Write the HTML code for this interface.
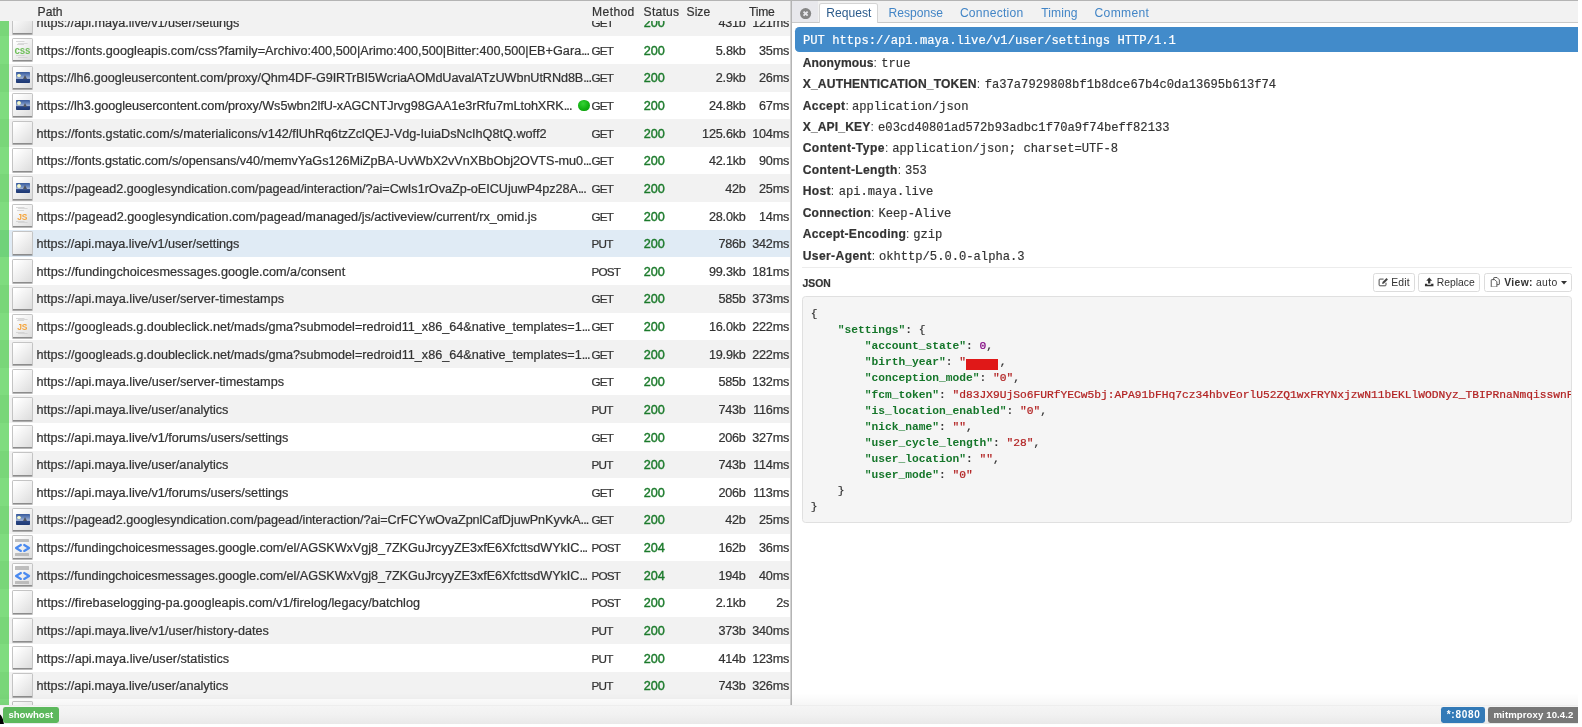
<!DOCTYPE html>
<html lang="en">
<head>
<meta charset="utf-8">
<title>mitmproxy</title>
<style>
html,body{margin:0;padding:0;background:#fff}
body{width:1582px;height:727px;overflow:hidden;position:relative;font-family:"Liberation Sans",sans-serif;font-size:12.1px;color:#333}
#app{position:absolute;left:0;top:0;width:1582px;height:727px;overflow:hidden;will-change:transform}
#topline{position:absolute;left:0;top:0;width:1582px;height:1px;background:#b4b4b4;z-index:20}
/* ---------- flow table ---------- */
#left{position:absolute;left:0;top:0;width:790.5px;height:705px;overflow:hidden;background:#fff}
#thead{position:absolute;left:0;top:0;width:790.5px;height:20.8px;background:#f2f2f2;z-index:5;line-height:23.9px;white-space:nowrap}
#thead span{position:absolute;top:.5px;-webkit-text-stroke:.2px #333}
.row{position:absolute;left:0;width:790.5px;height:27.63px;line-height:28.4px;font-size:12.65px;white-space:nowrap;overflow:hidden}
.row.ev{background:#f2f2f2}
.row.sel{background:#e0ebf5}
.row>span,.row>i{position:absolute;top:.45px}
.row>.tls{top:0}
.tls{left:0;width:8.9px;height:27.63px;background:rgba(0,185,0,.5)}
.ico{left:12.2px;top:1.6px !important;width:18.7px;height:21.6px;border:1px solid #c4c4c4;border-bottom:1px solid #8c8c8c;border-radius:1.6px;background:linear-gradient(135deg,#fff 10%,#f0f0f0 50%,#dcdcdc 100%);overflow:hidden;box-shadow:0 1px .6px rgba(0,0,0,.28)}
.path,.m,.sz,.t{-webkit-text-stroke:.22px #333}
.path{left:36.5px}
.path .el{letter-spacing:-.9px}
.dot{left:578.4px;top:8.2px !important;width:11.6px;height:11.6px;border-radius:50%;background:radial-gradient(circle at 42% 32%,#35d235 0%,#12b012 55%,#0a930a 100%)}
.m{left:591.4px;font-size:11.7px;letter-spacing:-.75px}
.s{left:643.8px;color:#1b7a2b;-webkit-text-stroke:.4px #1b7a2b}
.sz{right:44.8px;text-align:right;letter-spacing:-.2px}
.t{right:1.5px;text-align:right;letter-spacing:-.25px}
/* icon innards */
.ico .lbl{position:absolute;left:0;width:100%;text-align:center;font-weight:bold;line-height:1}
.lbl.css{top:5.3px;font-size:11.6px;color:#6fbf5a;letter-spacing:-.2px;transform:scaleX(.84)}
.lbl.js{top:7.1px;font-size:9.8px;color:#f5a53c;letter-spacing:-.2px;transform:scaleX(.86)}
.chev{position:absolute;left:0;top:0;width:18.7px;height:21.2px}
.ico .ln{position:absolute;left:2.6px;width:13px;height:3.4px;background:linear-gradient(#c9c9c9,#c9c9c9) 0 0/8.5px .7px no-repeat,linear-gradient(#cdcdcd,#cdcdcd) 2.2px 1.3px/9.6px .7px no-repeat,linear-gradient(#c9c9c9,#c9c9c9) .8px 2.6px/7px .7px no-repeat}
.ln.t{top:2.4px}.ln.b{top:16.4px;height:2.2px}
.ln.k{background:#b4b4b4;height:3.3px;opacity:.85;left:2.3px;width:13.2px;border-radius:.6px}
.ln.t.k{top:2.5px}.ln.b.k{top:17.2px;height:2.5px}
.pic{position:absolute;left:2.6px;top:5.6px;width:13.8px;height:10.6px;border-radius:.8px;background:linear-gradient(180deg,#35589a 0%,#6f8cc0 35%,#a5b6d6 58%,#2a4684 66%,#1d3873 100%);overflow:hidden}
.sun{position:absolute;left:1.4px;top:1.4px;width:3.8px;height:3.8px;border-radius:50%;background:radial-gradient(circle,#fdfde0 0%,#e6efc0 60%,rgba(200,215,170,0) 100%)}
.mt{position:absolute;left:7.6px;top:2.8px;width:0;height:0;border-left:2.2px solid transparent;border-right:2.2px solid transparent;border-bottom:4.6px solid #4f5560}
/* ---------- splitter ---------- */
#split{position:absolute;left:790px;top:0;width:2px;height:705px;background:linear-gradient(90deg,#d2d2d2 0,#d2d2d2 50%,#b4b4b4 50%,#b4b4b4 100%);z-index:6}
/* ---------- details ---------- */
#right{position:absolute;left:792.1px;top:0;width:789.9px;height:705px;overflow:hidden;background:#fff}
#nav{position:absolute;left:0;top:0;width:100%;height:21.7px;background:#f2f2f2;border-bottom:.9px solid #c9c9c9}
#nav a{position:absolute;top:3px;height:18px;line-height:19.4px;color:#4285c6;text-decoration:none;border:.9px solid transparent;border-bottom:0;padding:0 5.8px;border-radius:2.6px 2.6px 0 0;white-space:nowrap}
#nav a.act{background:#fff;border-color:#d4d4d4;color:#2c5c8c;height:19px}
#closebg{position:absolute;left:0;top:1px;width:25.6px;height:20.8px;background:#e8e8ec}
#close{position:absolute;left:8.4px;top:7.8px;width:11.2px;height:11.2px}
#first{position:absolute;left:3px;top:27.4px;width:800px;height:22.7px;padding-top:1.5px;line-height:24.6px;background:#428bca;color:#fff;border-radius:4.3px;font-family:"Liberation Mono",monospace;font-size:12.19px;-webkit-text-stroke:.2px;padding-left:7.8px;white-space:pre}
.h{position:absolute;left:10.6px;white-space:pre;line-height:21.44px;height:21.44px}
.h b{font-weight:bold;-webkit-text-stroke:.2px #333}
.h code{-webkit-text-stroke:.18px #333;font-family:"Liberation Mono",monospace;font-size:12.15px;position:absolute;top:1px}
#hr{position:absolute;left:10.4px;top:267.2px;width:769.6px;height:.9px;background:#ececec}
#ctitle{position:absolute;left:10.4px;top:277px;font-weight:bold;-webkit-text-stroke:.2px #333;font-size:10.36px;line-height:13px}
.btn{position:absolute;top:272.9px;height:17.3px;line-height:18.2px;border:.86px solid #dcdcdc;border-radius:2.6px;background:#fff;font-size:10.36px;white-space:nowrap;color:#333}
.btn svg{position:absolute}
.btn span{position:absolute;top:0}
#pre{position:absolute;left:10.4px;top:296.1px;width:768px;height:224.9px;border:.86px solid #e0e0e0;border-radius:3.5px;background:#f5f5f5;overflow:hidden}
#pre pre{margin:0;position:absolute;left:7.2px;top:9.2px;-webkit-text-stroke:.22px;font-family:"Liberation Mono",monospace;font-size:11.25px;line-height:16.04px;color:#333;white-space:pre}
.k{color:#15762a;font-weight:bold;-webkit-text-stroke:0}
.st{color:#b22222}
.n{color:#800080}
.red{display:inline-block;vertical-align:-4.4px;width:31.9px;height:11.2px;background:#e01818;margin:0 1.85px 0 0}
/* ---------- footer ---------- */
#foot{position:absolute;left:0;top:704.6px;width:1582px;height:20px;background:linear-gradient(180deg,#e9e9e9 0,#f5f5f5 1.2px,#f1f1f1 50%,#e8e8e8 100%)}
#fsh{position:absolute;left:0;top:693px;width:1582px;height:12px;background:linear-gradient(180deg,rgba(0,0,0,0) 0,rgba(0,0,0,.035) 100%);z-index:7}
.lab{position:absolute;top:2.6px;height:15.8px;line-height:16px;border-radius:2.4px;color:#fff;font-weight:bold;font-size:9.6px;white-space:nowrap}
#mask-r{position:absolute;left:1578px;top:0;width:4px;height:727px;background:#fff;z-index:50}
#mask-b{position:absolute;left:0;top:723.5px;width:1582px;height:4px;background:#fff;z-index:50}
#corner{position:absolute;left:-4px;top:8px;width:8.2px;height:12px;background:#000;border-radius:0 100% 0 0 / 0 100% 0 0}
</style>
</head>
<body>
<div id="app">
<div id="topline"></div>
<div id="left">
<div id="thead"><span style="left:37.6px">Path</span><span style="left:592.1px;letter-spacing:.38px">Method</span><span style="left:643.6px;letter-spacing:.25px">Status</span><span style="left:686.6px">Size</span><span style="left:749px;letter-spacing:-.2px">Time</span></div>
<div class="row ev" style="top:8.67px"><span class="tls"></span><span class="ico"></span><span class="path" id="p0" style="letter-spacing:-0.025px">https://api.maya.live/v1/user/settings</span><span class="m">GET</span><span class="s">200</span><span class="sz">431b</span><span class="t">121ms</span></div>
<div class="row" style="top:36.30px"><span class="tls"></span><span class="ico"><i class="ln t"></i><b class="lbl css">css</b><i class="ln b"></i></span><span class="path" id="p1" style="letter-spacing:0.032px">https://fonts.googleapis.com/css?family=Archivo:400,500|Arimo:400,500|Bitter:400,500|EB+Gara<span class="el">...</span></span><span class="m">GET</span><span class="s">200</span><span class="sz">5.8kb</span><span class="t">35ms</span></div>
<div class="row ev" style="top:63.93px"><span class="tls"></span><span class="ico"><span class="pic"><i class="sun"></i><i class="mt"></i></span></span><span class="path" id="p2" style="letter-spacing:-0.079px">https://lh6.googleusercontent.com/proxy/Qhm4DF-G9IRTrBI5WcriaAOMdUavalATzUWbnUtRNd8B<span class="el">...</span></span><span class="m">GET</span><span class="s">200</span><span class="sz">2.9kb</span><span class="t">26ms</span></div>
<div class="row" style="top:91.56px"><span class="tls"></span><span class="ico"><span class="pic"><i class="sun"></i><i class="mt"></i></span></span><span class="path" id="p3" style="letter-spacing:-0.048px">https://lh3.googleusercontent.com/proxy/Ws5wbn2lfU-xAGCNTJrvg98GAA1e3rRfu7mLtohXRK<span class="el">...</span></span><i class="dot"></i><span class="m">GET</span><span class="s">200</span><span class="sz">24.8kb</span><span class="t">67ms</span></div>
<div class="row ev" style="top:119.19px"><span class="tls"></span><span class="ico"></span><span class="path" id="p4" style="letter-spacing:0.018px">https://fonts.gstatic.com/s/materialicons/v142/flUhRq6tzZclQEJ-Vdg-IuiaDsNcIhQ8tQ.woff2</span><span class="m">GET</span><span class="s">200</span><span class="sz">125.6kb</span><span class="t">104ms</span></div>
<div class="row" style="top:146.82px"><span class="tls"></span><span class="ico"></span><span class="path" id="p5" style="letter-spacing:-0.031px">https://fonts.gstatic.com/s/opensans/v40/memvYaGs126MiZpBA-UvWbX2vVnXBbObj2OVTS-mu0<span class="el">...</span></span><span class="m">GET</span><span class="s">200</span><span class="sz">42.1kb</span><span class="t">90ms</span></div>
<div class="row ev" style="top:174.45px"><span class="tls"></span><span class="ico"><span class="pic"><i class="sun"></i><i class="mt"></i></span></span><span class="path" id="p6" style="letter-spacing:-0.023px">https://pagead2.googlesyndication.com/pagead/interaction/?ai=CwIs1rOvaZp-oEICUjuwP4pz28A<span class="el">...</span></span><span class="m">GET</span><span class="s">200</span><span class="sz">42b</span><span class="t">25ms</span></div>
<div class="row" style="top:202.08px"><span class="tls"></span><span class="ico"><i class="ln t"></i><b class="lbl js">JS</b><i class="ln b"></i></span><span class="path" id="p7" style="letter-spacing:0.009px">https://pagead2.googlesyndication.com/pagead/managed/js/activeview/current/rx_omid.js</span><span class="m">GET</span><span class="s">200</span><span class="sz">28.0kb</span><span class="t">14ms</span></div>
<div class="row ev sel" style="top:229.71px"><span class="tls"></span><span class="ico"></span><span class="path" id="p8" style="letter-spacing:-0.025px">https://api.maya.live/v1/user/settings</span><span class="m">PUT</span><span class="s">200</span><span class="sz">786b</span><span class="t">342ms</span></div>
<div class="row" style="top:257.34px"><span class="tls"></span><span class="ico"></span><span class="path" id="p9" style="letter-spacing:0.032px">https://fundingchoicesmessages.google.com/a/consent</span><span class="m">POST</span><span class="s">200</span><span class="sz">99.3kb</span><span class="t">181ms</span></div>
<div class="row ev" style="top:284.97px"><span class="tls"></span><span class="ico"></span><span class="path" id="p10" style="letter-spacing:0.005px">https://api.maya.live/user/server-timestamps</span><span class="m">GET</span><span class="s">200</span><span class="sz">585b</span><span class="t">373ms</span></div>
<div class="row" style="top:312.60px"><span class="tls"></span><span class="ico"><i class="ln t"></i><b class="lbl js">JS</b><i class="ln b"></i></span><span class="path" id="p11" style="letter-spacing:0.002px">https://googleads.g.doubleclick.net/mads/gma?submodel=redroid11_x86_64&amp;native_templates=1<span class="el">...</span></span><span class="m">GET</span><span class="s">200</span><span class="sz">16.0kb</span><span class="t">222ms</span></div>
<div class="row ev" style="top:340.23px"><span class="tls"></span><span class="ico"></span><span class="path" id="p12" style="letter-spacing:0.002px">https://googleads.g.doubleclick.net/mads/gma?submodel=redroid11_x86_64&amp;native_templates=1<span class="el">...</span></span><span class="m">GET</span><span class="s">200</span><span class="sz">19.9kb</span><span class="t">222ms</span></div>
<div class="row" style="top:367.86px"><span class="tls"></span><span class="ico"></span><span class="path" id="p13" style="letter-spacing:0.005px">https://api.maya.live/user/server-timestamps</span><span class="m">GET</span><span class="s">200</span><span class="sz">585b</span><span class="t">132ms</span></div>
<div class="row ev" style="top:395.49px"><span class="tls"></span><span class="ico"></span><span class="path" id="p14" style="letter-spacing:-0.017px">https://api.maya.live/user/analytics</span><span class="m">PUT</span><span class="s">200</span><span class="sz">743b</span><span class="t">116ms</span></div>
<div class="row" style="top:423.12px"><span class="tls"></span><span class="ico"></span><span class="path" id="p15" style="letter-spacing:-0.009px">https://api.maya.live/v1/forums/users/settings</span><span class="m">GET</span><span class="s">200</span><span class="sz">206b</span><span class="t">327ms</span></div>
<div class="row ev" style="top:450.75px"><span class="tls"></span><span class="ico"></span><span class="path" id="p16" style="letter-spacing:-0.017px">https://api.maya.live/user/analytics</span><span class="m">PUT</span><span class="s">200</span><span class="sz">743b</span><span class="t">114ms</span></div>
<div class="row" style="top:478.38px"><span class="tls"></span><span class="ico"></span><span class="path" id="p17" style="letter-spacing:-0.009px">https://api.maya.live/v1/forums/users/settings</span><span class="m">GET</span><span class="s">200</span><span class="sz">206b</span><span class="t">113ms</span></div>
<div class="row ev" style="top:506.01px"><span class="tls"></span><span class="ico"><span class="pic"><i class="sun"></i><i class="mt"></i></span></span><span class="path" id="p18" style="letter-spacing:-0.057px">https://pagead2.googlesyndication.com/pagead/interaction/?ai=CrFCYwOvaZpnlCafDjuwPnKyvkA<span class="el">...</span></span><span class="m">GET</span><span class="s">200</span><span class="sz">42b</span><span class="t">25ms</span></div>
<div class="row" style="top:533.64px"><span class="tls"></span><span class="ico"><i class="ln t k"></i><svg class="chev" viewBox="0 0 18.7 21.2"><path d="M7.9 9 L3 12 L7.9 15 M11.2 9 L16.1 12 L11.2 15" fill="none" stroke="#4a8af0" stroke-width="2.15" stroke-linejoin="round" stroke-linecap="round"/></svg><i class="ln b k"></i></span><span class="path" id="p19" style="letter-spacing:-0.052px">https://fundingchoicesmessages.google.com/el/AGSKWxVgj8_7ZKGuJrcyyZE3xfE6XfcttsdWYkIC<span class="el">...</span></span><span class="m">POST</span><span class="s">204</span><span class="sz">162b</span><span class="t">36ms</span></div>
<div class="row ev" style="top:561.27px"><span class="tls"></span><span class="ico"><i class="ln t k"></i><svg class="chev" viewBox="0 0 18.7 21.2"><path d="M7.9 9 L3 12 L7.9 15 M11.2 9 L16.1 12 L11.2 15" fill="none" stroke="#4a8af0" stroke-width="2.15" stroke-linejoin="round" stroke-linecap="round"/></svg><i class="ln b k"></i></span><span class="path" id="p20" style="letter-spacing:-0.052px">https://fundingchoicesmessages.google.com/el/AGSKWxVgj8_7ZKGuJrcyyZE3xfE6XfcttsdWYkIC<span class="el">...</span></span><span class="m">POST</span><span class="s">204</span><span class="sz">194b</span><span class="t">40ms</span></div>
<div class="row" style="top:588.90px"><span class="tls"></span><span class="ico"></span><span class="path" id="p21" style="letter-spacing:0.050px">https://firebaselogging-pa.googleapis.com/v1/firelog/legacy/batchlog</span><span class="m">POST</span><span class="s">200</span><span class="sz">2.1kb</span><span class="t">2s</span></div>
<div class="row ev" style="top:616.53px"><span class="tls"></span><span class="ico"></span><span class="path" id="p22" style="letter-spacing:-0.004px">https://api.maya.live/v1/user/history-dates</span><span class="m">PUT</span><span class="s">200</span><span class="sz">373b</span><span class="t">340ms</span></div>
<div class="row" style="top:644.16px"><span class="tls"></span><span class="ico"></span><span class="path" id="p23" style="letter-spacing:0.024px">https://api.maya.live/user/statistics</span><span class="m">PUT</span><span class="s">200</span><span class="sz">414b</span><span class="t">123ms</span></div>
<div class="row ev" style="top:671.79px"><span class="tls"></span><span class="ico"></span><span class="path" id="p24" style="letter-spacing:-0.017px">https://api.maya.live/user/analytics</span><span class="m">PUT</span><span class="s">200</span><span class="sz">743b</span><span class="t">326ms</span></div>
<div class="row" style="top:699.42px"><span class="tls"></span><span class="ico"></span><span class="path" id="p25"></span><span class="m"></span><span class="s"></span><span class="sz"></span><span class="t"></span></div>
</div>
<div id="split"></div>
<div id="right">
<div id="nav">
<div id="closebg"></div>
<svg id="close" viewBox="0 0 12 12"><circle cx="6" cy="6" r="6" fill="#858585"/><path d="M3.8 3.8 L8.2 8.2 M8.2 3.8 L3.8 8.2" stroke="#e8e8ec" stroke-width="2" stroke-linecap="butt"/></svg>
<a class="act" style="left:27.4px">Request</a>
<a style="left:89.6px">Response</a>
<a style="left:161px;letter-spacing:.24px">Connection</a>
<a style="left:242.3px;letter-spacing:.1px">Timing</a>
<a style="left:295.7px;letter-spacing:.3px">Comment</a>
</div>
<div id="first">PUT https://api.maya.live/v1/user/settings HTTP/1.1</div>
<div class="h" style="top:52.70px"><b id="h0" style="letter-spacing:0.115px">Anonymous</b>: <code style="left:78.6px">true</code></div>
<div class="h" style="top:74.14px"><b id="h1" style="letter-spacing:0.170px">X_AUTHENTICATION_TOKEN</b>: <code style="left:182.0px">fa37a7929808bf1b8dce67b4c0da13695b613f74</code></div>
<div class="h" style="top:95.58px"><b id="h2" style="letter-spacing:0.417px">Accept</b>: <code style="left:49.2px">application/json</code></div>
<div class="h" style="top:117.02px"><b id="h3" style="letter-spacing:0.133px">X_API_KEY</b>: <code style="left:75.4px">e03cd40801ad572b93adbc1f70a9f74beff82133</code></div>
<div class="h" style="top:138.46px"><b id="h4" style="letter-spacing:0.433px">Content-Type</b>: <code style="left:89.6px">application/json; charset=UTF-8</code></div>
<div class="h" style="top:159.90px"><b id="h5" style="letter-spacing:0.361px">Content-Length</b>: <code style="left:102.3px">353</code></div>
<div class="h" style="top:181.34px"><b id="h6" style="letter-spacing:0.312px">Host</b>: <code style="left:36.0px">api.maya.live</code></div>
<div class="h" style="top:202.78px"><b id="h7" style="letter-spacing:0.189px">Connection</b>: <code style="left:75.8px">Keep-Alive</code></div>
<div class="h" style="top:224.22px"><b id="h8" style="letter-spacing:0.261px">Accept-Encoding</b>: <code style="left:110.5px">gzip</code></div>
<div class="h" style="top:245.66px"><b id="h9" style="letter-spacing:0.381px">User-Agent</b>: <code style="left:76.2px">okhttp/5.0.0-alpha.3</code></div>
<div id="hr"></div>
<div id="ctitle">JSON</div>
<div class="btn" style="left:581px;width:39.8px"><svg style="left:3.8px;top:3.6px" width="10.4" height="9.6" viewBox="0 0 13 12"><path d="M10 7.2 V10 a1 1 0 0 1 -1 1 H2.4 a1 1 0 0 1 -1 -1 V3.6 a1 1 0 0 1 1 -1 H7" fill="none" stroke="#444" stroke-width="1.2"/><path d="M5.2 8.6 L5.6 6.4 L10.6 1.4 L12.4 3.2 L7.4 8.2 Z" fill="#444"/></svg><span style="left:17.2px;letter-spacing:.15px">Edit</span></div>
<div class="btn" style="left:625.9px;width:60.2px"><svg style="left:5.2px;top:3.4px" width="10.4" height="9.8" viewBox="0 0 12 12"><path d="M6 0.6 L9.6 4.6 H7.4 V8 H4.6 V4.6 H2.4 Z" fill="#333"/><path d="M0.8 8.4 H3.6 V9.6 H8.4 V8.4 H11.2 V11.4 H0.8 Z" fill="#333"/></svg><span style="left:17.8px">Replace</span></div>
<div class="btn" style="left:691.6px;width:86.2px"><svg style="left:5.2px;top:3px" width="10.6" height="10.6" viewBox="0 0 12 12"><path d="M4.2 3 V1.2 a.6 .6 0 0 1 .6 -.6 H8 L10.6 3.2 V8 a.6 .6 0 0 1 -.6 .6 H8" fill="none" stroke="#444" stroke-width="1"/><path d="M1.4 3.6 a.6 .6 0 0 1 .6 -.6 H5.4 L7.8 5.4 V10.8 a.6 .6 0 0 1 -.6 .6 H2 a.6 .6 0 0 1 -.6 -.6 Z" fill="none" stroke="#444" stroke-width="1"/></svg><span style="left:19.6px;letter-spacing:.33px"><b>View:</b> auto</span><svg style="left:76.3px;top:7.6px" width="6" height="3.4" viewBox="0 0 6 3.4"><path d="M0 0 H6 L3 3.4 Z" fill="#333"/></svg></div>
<div id="pre"><pre>{
    <span class="k">"settings"</span>: {
        <span class="k">"account_state"</span>: <span class="n">0</span>,
        <span class="k">"birth_year"</span>: <span class="st">"</span><i class="red"></i>,
        <span class="k">"conception_mode"</span>: <span class="st">"0"</span>,
        <span class="k">"fcm_token"</span>: <span class="st">"d83JX9UjSo6FURfYECw5bj:APA91bFHq7cz34hbvEorlU52ZQ1wxFRYNxjzwN11bEKLlWODNyz_TBIPRnaNmqisswnFk2TqLx8vUe0pQ"</span>,
        <span class="k">"is_location_enabled"</span>: <span class="st">"0"</span>,
        <span class="k">"nick_name"</span>: <span class="st">""</span>,
        <span class="k">"user_cycle_length"</span>: <span class="st">"28"</span>,
        <span class="k">"user_location"</span>: <span class="st">""</span>,
        <span class="k">"user_mode"</span>: <span class="st">"0"</span>
    }
}</pre></div>
</div>
<div id="fsh"></div>
<div id="foot">
<div id="corner"></div>
<span class="lab" style="left:2.8px;width:56px;background:#5cb85c;text-align:center">showhost</span>
<span class="lab" style="left:1441.3px;width:44px;background:#337ab7;text-align:center;font-size:10px;letter-spacing:.75px;text-indent:.75px">*:8080</span>
<span class="lab" style="left:1488.3px;width:92px;background:#777;padding-left:5.2px;letter-spacing:.1px">mitmproxy 10.4.2</span>
</div>
<div id="mask-r"></div>
<div id="mask-b"></div>
</div>
</body>
</html>
